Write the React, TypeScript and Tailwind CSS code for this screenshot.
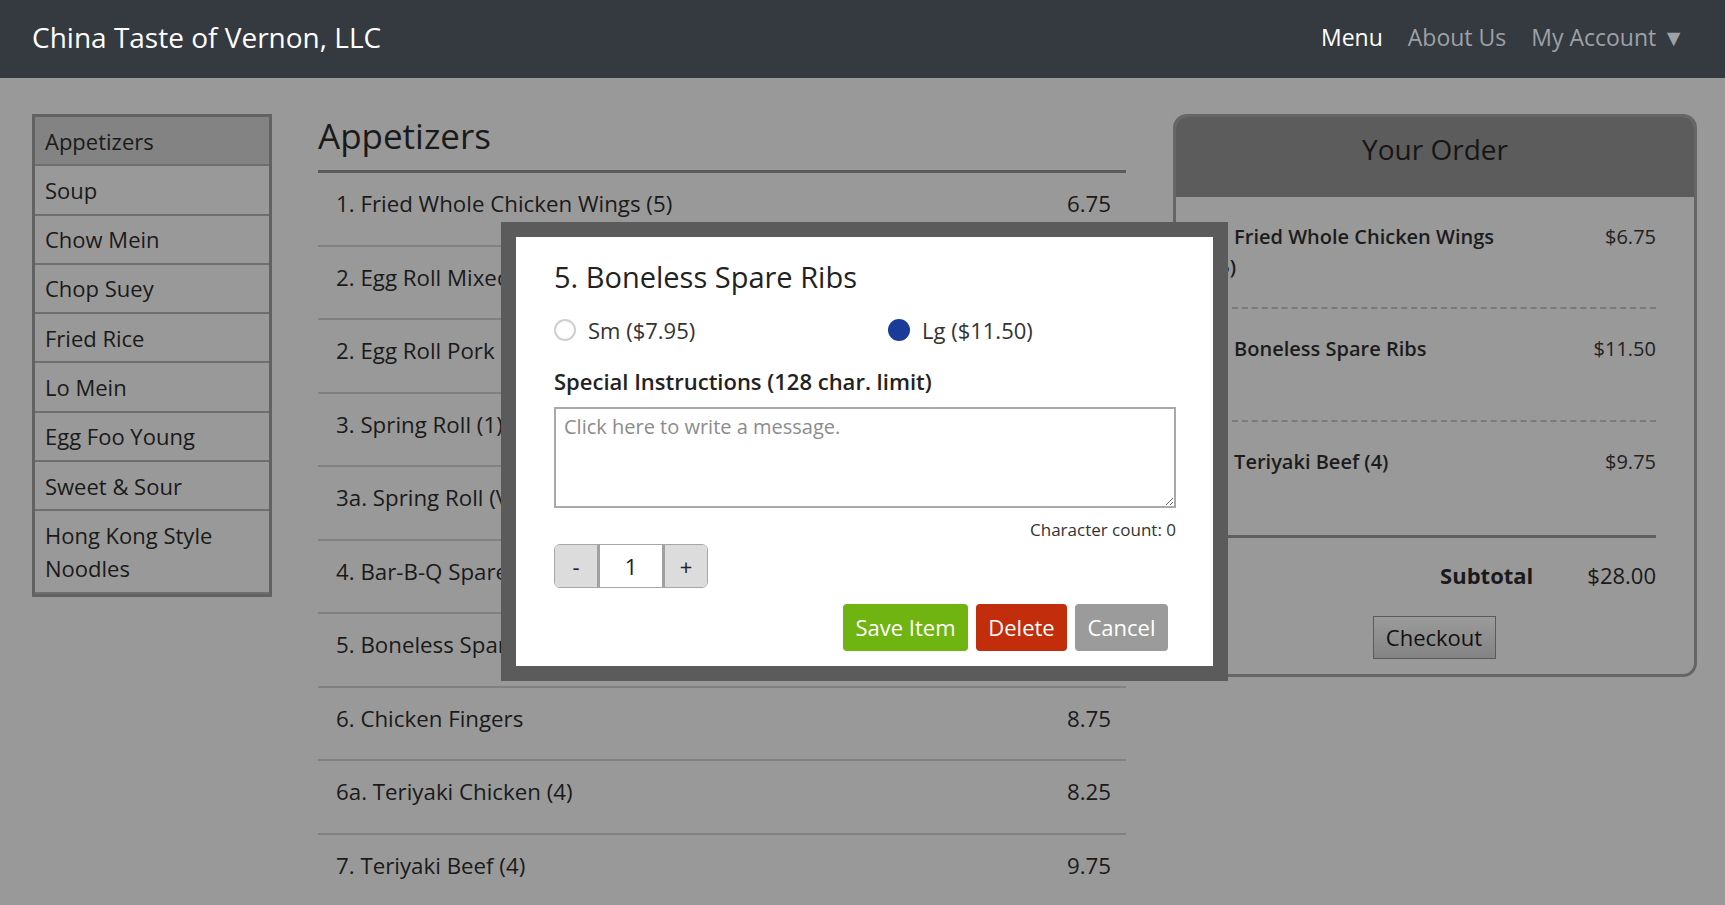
import React from "react";

const categories = [
  "Appetizers",
  "Soup",
  "Chow Mein",
  "Chop Suey",
  "Fried Rice",
  "Lo Mein",
  "Egg Foo Young",
  "Sweet & Sour",
  "Hong Kong Style Noodles",
];

const items = [
  { name: "1. Fried Whole Chicken Wings (5)", price: "6.75" },
  { name: "2. Egg Roll Mixed (1)", price: "" },
  { name: "2. Egg Roll Pork (1)", price: "" },
  { name: "3. Spring Roll (1)", price: "" },
  { name: "3a. Spring Roll (Vegetable)", price: "" },
  { name: "4. Bar-B-Q Spare Ribs", price: "" },
  { name: "5. Boneless Spare Ribs", price: "" },
  { name: "6. Chicken Fingers", price: "8.75" },
  { name: "6a. Teriyaki Chicken (4)", price: "8.25" },
  { name: "7. Teriyaki Beef (4)", price: "9.75" },
];

const order = [
  { name: "1. Fried Whole Chicken Wings (5)", price: "$6.75", h: "h-[112px]" },
  { name: "5. Boneless Spare Ribs", price: "$11.50", h: "h-[113px]" },
  { name: "7. Teriyaki Beef (4)", price: "$9.75", h: "h-[113px]" },
];

export default function App() {
  return (
    <div className="relative w-[1725px] h-[905px] overflow-hidden bg-[#999999] font-['Open_Sans','Noto_Sans',sans-serif] text-[#1a1a1a]">
      {/* Header */}
      <header className="h-[78px] bg-[#353940] flex items-center justify-between pl-[32px] pr-[40px] pb-[4px]">
        <div className="text-[28px] text-white leading-none">China Taste of Vernon, LLC</div>
        <nav className="flex items-center gap-[25px] text-[23px] leading-none">
          <span className="text-white">Menu</span>
          <span className="text-[#9ea1a6]">About Us</span>
          <span className="text-[#9ea1a6]">My Account ▼</span>
        </nav>
      </header>

      {/* Body */}
      <div className="flex items-start pt-[36px] pl-[32px] pr-[28px]">
        {/* Sidebar */}
        <aside className="w-[240px] shrink-0 border-[3px] border-[#626262]">
          {categories.map((c, i) => (
            <div
              key={c}
              className={`px-[10px] pt-[7.5px] pb-[6.5px] text-[22px] leading-[33.3px] border-b-2 border-[#6e6e6e] ${
                i === 0 ? "bg-[#838383]" : ""
              }`}
            >
              {c}
            </div>
          ))}
        </aside>

        {/* Main menu list */}
        <main className="flex-1 ml-[46px] mr-[47px]">
          <h1 className="text-[35px] leading-[44px] pb-[12px] border-b-[3px] border-[#5a5a5a]">Appetizers</h1>
          {items.map((it) => (
            <div
              key={it.name}
              className="flex justify-between pl-[18px] pr-[15px] pt-[14px] pb-[24.5px] text-[22.3px] leading-[33px] border-b-2 border-[#808080]"
            >
              <span>{it.name}</span>
              {it.price ? <span>{it.price}</span> : null}
            </div>
          ))}
        </main>

        {/* Order panel */}
        <section className="w-[524px] shrink-0 border-[3px] border-[#666666] rounded-[14px] overflow-hidden">
          <div className="h-[80px] bg-[#5c5c5c] pt-[12px] text-center text-[28px] leading-[40px] text-[#161616]">
            Your Order
          </div>
          <div className="pl-[36px] pr-[38px]">
            {order.map((o, i) => (
              <div
                key={o.name}
                className={`${o.h} pt-[25px] flex justify-between items-start text-[20px] leading-[30px] ${
                  i < order.length - 1 ? "border-b-2 border-dashed border-[#7a7a7a]" : ""
                }`}
              >
                <span className="w-[292px] font-semibold text-[#1c1c1c]">{o.name}</span>
                <span className="text-[#222]">{o.price}</span>
              </div>
            ))}
            <div className="border-t-[3px] border-[#5e5e5e] flex justify-end gap-[54px] pt-[21px] text-[22px] leading-[33px]">
              <span className="font-bold">Subtotal</span>
              <span>$28.00</span>
            </div>
            <div className="flex justify-center mt-[24px] pb-[15px]">
              <button className="w-[123px] h-[43px] border border-[#5a5a5a] bg-linear-to-b from-[#9b9b9b] to-[#838383] text-[22px] text-[#111]">
                Checkout
              </button>
            </div>
          </div>
        </section>
      </div>

      {/* Modal */}
      <div className="absolute left-[501px] top-[222px] w-[727px] h-[459px] border-[15px] border-[#5b5b5b] bg-white pl-[38px] pr-[37px] pt-[23px]">
        <h2 className="text-[29px] leading-[34px] font-medium text-[#222]">5. Boneless Spare Ribs</h2>
        <div className="mt-[19.5px] grid grid-cols-[334px_1fr] text-[22px] leading-[33px] text-[#333]">
          <label className="flex items-center gap-[12px]">
            <span className="w-[22px] h-[22px] rounded-full border-2 border-[#cfcfcf] bg-white" />
            <span>Sm ($7.95)</span>
          </label>
          <label className="flex items-center gap-[12px]">
            <span className="w-[22px] h-[22px] rounded-full bg-[#1b3b98]" />
            <span>Lg ($11.50)</span>
          </label>
        </div>
        <div className="mt-[18px] text-[22px] leading-[33px] font-semibold text-[#222]">
          Special Instructions (128 char. limit)
        </div>
        <textarea
          className="mt-[9.5px] block w-full h-[101px] border-2 border-[#a9a9a9] px-[8px] py-[4px] text-[20px] leading-[28px] text-[#222] placeholder:text-[#8c8c8c] resize-y outline-none"
          placeholder="Click here to write a message."
        />
        <div className="mt-[10px] text-right text-[17px] leading-[24px] text-[#333]">Character count: 0</div>
        <div className="mt-[2px] flex w-[154px] h-[44px] border-[1.5px] border-[#a6a6a6] rounded-[6px] overflow-hidden text-[22px] text-[#222]">
          <div className="w-[42px] bg-[#dcdcdc] flex items-center justify-center">-</div>
          <div className="w-[3px] bg-[#a0a0a0]" />
          <div className="w-[62px] bg-white flex items-center justify-center">1</div>
          <div className="w-[3px] bg-[#a0a0a0]" />
          <div className="flex-1 bg-[#dcdcdc] flex items-center justify-center">+</div>
        </div>
        <div className="mt-[16px] flex justify-end gap-[8px] pr-[8px] text-[22px] text-white">
          <button className="w-[125px] h-[47px] rounded-[4px] bg-[#6fb410]">Save Item</button>
          <button className="w-[91px] h-[47px] rounded-[4px] bg-[#c22d0b]">Delete</button>
          <button className="w-[93px] h-[47px] rounded-[4px] bg-[#9b9b9b]">Cancel</button>
        </div>
      </div>
    </div>
  );
}
